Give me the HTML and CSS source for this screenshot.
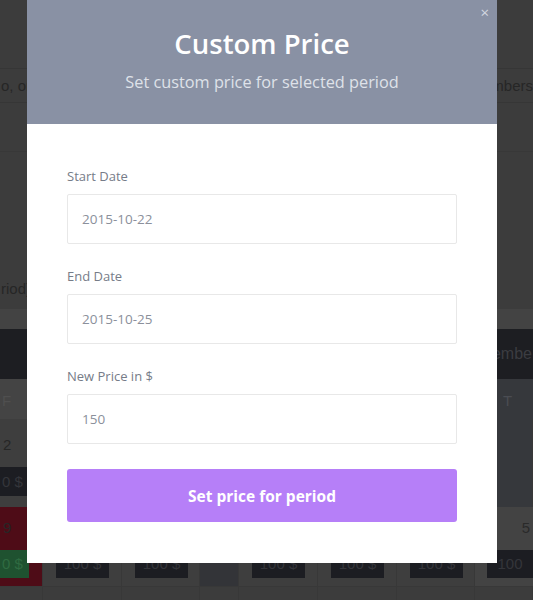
FILE: index.html
```html
<!DOCTYPE html>
<html>
<head>
<meta charset="utf-8">
<link rel="stylesheet" href="styles.css">
</head>
<body>
<div class="page">
  <div class="top-gap"></div>
  <div class="info-row">
    <span class="info-left">o, only</span>
    <span class="info-right">members</span>
  </div>
  <div class="info-row2"></div>
  <div class="desc">
    <span class="desc-text">riod)</span>
  </div>
  <div class="band"></div>
  <div class="cal-head"><span class="cal-title">embe</span></div>
  <div class="cal">
    <div class="c wd">F</div>
    <div class="c wd span6"></div>
    <div class="c wd dark right">T</div>

    <div class="c day first">
      <span class="num">2</span>
      <span class="badge b-left">0 $</span>
    </div>
    <div class="c day span6"></div>
    <div class="c day dark"></div>

    <div class="c day red first">
      <span class="num">9</span>
      <span class="badge green">0 $</span>
    </div>
    <div class="c day low"><span class="badge">100 $</span></div>
    <div class="c day low"><span class="badge">100 $</span></div>
    <div class="c day low dim"></div>
    <div class="c day low"><span class="badge">100 $</span></div>
    <div class="c day low"><span class="badge">100 $</span></div>
    <div class="c day low"><span class="badge">100 $</span></div>
    <div class="c day low last"><span class="num rnum">5</span><span class="badge">100</span></div>

    <div class="c tail"></div>
    <div class="c tail"></div>
    <div class="c tail"></div>
    <div class="c tail"></div>
    <div class="c tail"></div>
    <div class="c tail"></div>
    <div class="c tail"></div>
    <div class="c tail"></div>
  </div>
</div>

<div class="modal">
  <div class="modal-head">
    <span class="close">×</span>
    <h1 class="title">Custom Price</h1>
    <p class="subtitle">Set custom price for selected period</p>
  </div>
  <div class="modal-body">
    <label class="label">Start Date</label>
    <div class="input">2015-10-22</div>
    <label class="label">End Date</label>
    <div class="input">2015-10-25</div>
    <label class="label">New Price in $</label>
    <div class="input">150</div>
    <button class="btn">Set price for period</button>
  </div>
</div>
</body>
</html>
```

FILE: styles.css
```css
* { box-sizing: border-box; }
html, body { margin: 0; padding: 0; }
body {
  width: 533px;
  height: 600px;
  overflow: hidden;
  background: #3c3c3c;
  font-family: "Liberation Sans", Arial, sans-serif;
  position: relative;
}
.page { width: 533px; }
.top-gap { height: 69px; border-bottom: 1px solid #363636; }
.info-row {
  height: 34px;
  border-bottom: 1px solid #363636;
  display: flex;
  justify-content: space-between;
  align-items: center;
  font-size: 15px;
  color: #262626;
}
.info-left { margin-left: 1px; }
.info-right { margin-right: 0; }
.info-row2 { height: 49px; border-bottom: 1px solid #383838; }
.desc {
  height: 157px;
  display: flex;
  align-items: flex-end;
  padding-bottom: 12px;
  font-size: 15px;
  color: #262626;
}
.desc-text { margin-left: 1px; }
.band { height: 20px; background: #434343; }
.cal-head {
  height: 50px;
  background: #1d1e22;
  display: flex;
  justify-content: flex-end;
  align-items: center;
  font-size: 16px;
  color: #3b3c41;
}
.cal-title { margin-right: 1px; }
.cal {
  display: grid;
  grid-template-columns: 43px 79px 78px 39px 79px 79px 78px 58px;
  grid-template-rows: 40px 88px 80px 40px;
}
.c { position: relative; border-right: 1px solid #383838; }
.span6 { grid-column: span 6; }
.wd {
  background: #444444;
  font-size: 15px;
  color: #4f4f4f;
  padding: 13px 0 0 2px;
}
.wd.right { padding: 13px 0 0 28px; border-right: 0; color: #4a4c52; }
.dark { background: #36383c !important; }
.day { background: #3e3e3e; }
.num { position: absolute; left: 3px; top: 17px; font-size: 15px; color: #262626; }
.rnum { left: auto; right: 3px; top: 12px; color: #2a2a2a; }
.badge {
  position: absolute;
  left: 13px;
  top: 43px;
  width: 53px;
  height: 28px;
  background: #1c1d22;
  color: #34353a;
  font-size: 15px;
  line-height: 28px;
  text-align: center;
}
.b-left {
  left: 0;
  top: 48px;
  width: 46px;
  height: 29px;
  line-height: 29px;
  text-align: left;
  padding-left: 2px;
}
.red { background: #4e0c17; border-bottom: 1px solid #3a3a3a; }
.red .num { top: 12px; }
.red .badge.green {
  background: #1f5230;
  color: #2f6b41;
  top: 43px;
  left: 0;
  width: 29px;
  height: 28px;
  text-align: left;
  padding-left: 2px;
}
.low { border-bottom: 1px solid #383838; }
.low .badge { top: 43px; }
.dim { background: #333438; }
.last { background: #434343; border-right: 0; }
.last .badge { left: 12px; width: 46px; }
.tail { background: #3c3c3c; }

.modal {
  position: absolute;
  left: 27px;
  top: 0;
  width: 470px;
  height: 563px;
  background: #ffffff;
  font-family: "Open Sans", "Liberation Sans", sans-serif;
}
.modal-head {
  position: relative;
  height: 124px;
  background: #8991a4;
  text-align: center;
  padding-top: 26px;
}
.close {
  position: absolute;
  right: 8px;
  top: 2px;
  font-size: 15px;
  color: #d4d8e0;
}
.title {
  margin: 0;
  font-size: 27.5px;
  line-height: 36px;
  font-weight: 600;
  color: #ffffff;
}
.subtitle {
  margin: 9px 0 0;
  font-size: 16.3px;
  line-height: 22px;
  color: #dfe2e9;
}
.modal-body {
  padding: 44px 40px 0;
  display: flex;
  flex-direction: column;
}
.label {
  font-size: 13px;
  line-height: 16px;
  color: #767c88;
  margin-bottom: 10px;
}
.input {
  height: 50px;
  border: 1px solid #e8e8e8;
  border-radius: 2px;
  padding: 0 14px;
  display: flex;
  align-items: center;
  font-size: 13.5px;
  color: #8b909b;
  margin-bottom: 24px;
}
.btn {
  margin-top: 1px;
  height: 53px;
  border: 0;
  border-radius: 3px;
  background: #b67ff8;
  color: #ffffff;
  font-family: "Open Sans", "Liberation Sans", sans-serif;
  font-size: 15.5px;
  font-weight: 700;
}
```
